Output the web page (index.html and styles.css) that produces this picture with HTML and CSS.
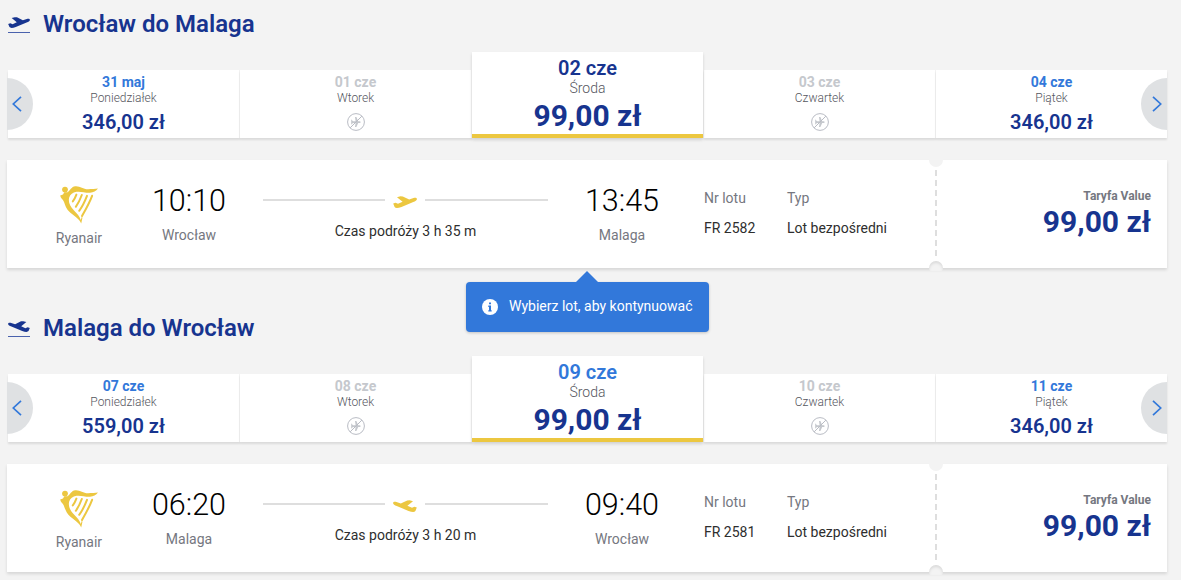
FILE: index.html
```html
<!DOCTYPE html>
<html lang="pl">
<head>
    <meta charset="UTF-8">
    <meta name="viewport" content="width=device-width, initial-scale=1.0">
    <title>Wybierz lot</title>
    <link rel="stylesheet" href="styles.css">
</head>
<body>
    <svg class="sprite" width="0" height="0">
        <symbol id="plane" viewBox="0 0 24 12">
            <path d="M.2 7.6 2.6 6.8 5 7.8 9.6 5.8 4 1.2 7.4.3 9.8.4 16.2 3.6 20.5 2.1C22.5 1.5 24 2 23.9 3.2 23.8 4.4 22.3 5.1 20.3 6L8.5 10.9C5 12.1 2.6 12.3 1.6 11Z"/>
        </symbol>
        <symbol id="harp" viewBox="0 0 38 38">
            <circle cx="5" cy="3.6" r="2.9"/>
            <path d="M.2 9.6 3 8.6 4.3 6.2 7.6 6.2C10 4.5 11.4.6 15.3.2 20-.2 23 3.2 28 3.2 32 3.2 35 3 38 2.6 36 5.2 33.5 6.7 30 6.8 25 7 21 5.2 16.5 5.8 12.5 6.4 10.4 8.4 9.2 11.4 8 16 10 20.4 13.8 24.2 17 27.6 19.8 30.4 20.8 34L22 30 22.4 32 21.2 37.5C19.2 32.8 14.7 30.6 10.4 26.8 6 22.8 5.3 19.3 3.9 15.7 3 13.5.4 12.4.2 9.6Z"/>
            <path class="strings" d="M16.4 8.6C15.5 11 14.6 13 12.8 15.4M21.8 9C20.5 12.5 18.6 17 15.8 20.8M27 9.9C25.2 14.5 22.5 20.5 19.2 24.8M32.1 9.8C29.8 16 26 23 22 30"/>
        </symbol>
        <symbol id="no-flight" viewBox="0 0 18 18">
            <path class="body" d="M4.2 6.2 6 8.2H8.6L8 4H9.4L11.2 8.2H12.8Q14.8 9 12.8 9.9H11.2L9.4 14H8L8.6 9.9H6L4.2 11.8Z"/>
            <path d="M3.1 14.9 14.9 3.1"/>
            <circle cx="9" cy="9" r="8.4"/>
        </symbol>
        <symbol id="chevron" viewBox="0 0 10 16">
            <path d="M9 .8 1.3 8 9 15.2"/>
        </symbol>
    </svg>

    <section class="journey">
        <header class="journey-header">
            <span class="journey-icon"><svg><use href="#plane"/></svg></span>
            <h2>Wrocław do Malaga</h2>
        </header>
        <div class="carousel">
            <button class="arrow prev" aria-label="Wstecz"><svg><use href="#chevron"/></svg></button>
            <div class="day">
                <div class="date">31 maj</div>
                <div class="weekday">Poniedziałek</div>
                <div class="price">346,00 zł</div>
            </div>
            <div class="day disabled">
                <div class="date">01 cze</div>
                <div class="weekday">Wtorek</div>
                <svg class="no-flight"><use href="#no-flight"/></svg>
            </div>
            <div class="day selected current">
                <div class="date">02 cze</div>
                <div class="weekday">Środa</div>
                <div class="price">99,00 zł</div>
            </div>
            <div class="day disabled">
                <div class="date">03 cze</div>
                <div class="weekday">Czwartek</div>
                <svg class="no-flight"><use href="#no-flight"/></svg>
            </div>
            <div class="day last">
                <div class="date">04 cze</div>
                <div class="weekday">Piątek</div>
                <div class="price">346,00 zł</div>
            </div>
            <button class="arrow next" aria-label="Dalej"><svg><use href="#chevron"/></svg></button>
        </div>
        <div class="flight-card">
            <div class="airline">
                <svg><use href="#harp"/></svg>
                <span>Ryanair</span>
            </div>
            <div class="stop">
                <div class="time">10:10</div>
                <div class="city">Wrocław</div>
            </div>
            <div class="duration">
                <div class="route"><svg><use href="#plane"/></svg></div>
                <div>Czas podróży 3 h 35 m</div>
            </div>
            <div class="stop">
                <div class="time">13:45</div>
                <div class="city">Malaga</div>
            </div>
            <dl class="details number">
                <dt>Nr lotu</dt>
                <dd>FR 2582</dd>
            </dl>
            <dl class="details">
                <dt>Typ</dt>
                <dd>Lot bezpośredni</dd>
            </dl>
            <div class="tear"></div>
            <div class="fare">
                <div class="fare-name">Taryfa Value</div>
                <div class="fare-price">99,00 zł</div>
            </div>
            <div class="tooltip">
                <svg viewBox="0 0 16 16">
                    <circle cx="8" cy="8" r="8"/>
                    <path d="M7 3.4H9V5.2H7ZM6.3 6.6H9V11.2H9.7V12.5H6.3V11.2H7V7.9H6.3Z"/>
                </svg>
                <span>Wybierz lot, aby kontynuować</span>
            </div>
        </div>
    </section>

    <section class="journey inbound">
        <header class="journey-header">
            <span class="journey-icon"><svg><use href="#plane"/></svg></span>
            <h2>Malaga do Wrocław</h2>
        </header>
        <div class="carousel">
            <button class="arrow prev" aria-label="Wstecz"><svg><use href="#chevron"/></svg></button>
            <div class="day">
                <div class="date">07 cze</div>
                <div class="weekday">Poniedziałek</div>
                <div class="price">559,00 zł</div>
            </div>
            <div class="day disabled">
                <div class="date">08 cze</div>
                <div class="weekday">Wtorek</div>
                <svg class="no-flight"><use href="#no-flight"/></svg>
            </div>
            <div class="day selected">
                <div class="date">09 cze</div>
                <div class="weekday">Środa</div>
                <div class="price">99,00 zł</div>
            </div>
            <div class="day disabled">
                <div class="date">10 cze</div>
                <div class="weekday">Czwartek</div>
                <svg class="no-flight"><use href="#no-flight"/></svg>
            </div>
            <div class="day last">
                <div class="date">11 cze</div>
                <div class="weekday">Piątek</div>
                <div class="price">346,00 zł</div>
            </div>
            <button class="arrow next" aria-label="Dalej"><svg><use href="#chevron"/></svg></button>
        </div>
        <div class="flight-card">
            <div class="airline">
                <svg><use href="#harp"/></svg>
                <span>Ryanair</span>
            </div>
            <div class="stop">
                <div class="time">06:20</div>
                <div class="city">Malaga</div>
            </div>
            <div class="duration">
                <div class="route"><svg><use href="#plane"/></svg></div>
                <div>Czas podróży 3 h 20 m</div>
            </div>
            <div class="stop">
                <div class="time">09:40</div>
                <div class="city">Wrocław</div>
            </div>
            <dl class="details number">
                <dt>Nr lotu</dt>
                <dd>FR 2581</dd>
            </dl>
            <dl class="details">
                <dt>Typ</dt>
                <dd>Lot bezpośredni</dd>
            </dl>
            <div class="tear"></div>
            <div class="fare">
                <div class="fare-name">Taryfa Value</div>
                <div class="fare-price">99,00 zł</div>
            </div>
        </div>
    </section>
</body>
</html>
```
FILE: styles.css
```css
* {
    box-sizing: border-box;
    margin: 0;
    padding: 0;
}
body {
    font-family: Roboto, "Liberation Sans", sans-serif;
    font-size: 14px;
    line-height: 16px;
    background-color: #f3f3f3;
    color: #2e2e2e;
    overflow: hidden;
}
.sprite {
    position: absolute;
}
.journey {
    width: 1160px;
    height: 304px;
    margin-left: 7px;
}
.journey-header {
    display: flex;
    align-items: center;
    height: 48px;
    color: #17348f;
}
.journey-icon {
    width: 22px;
    height: 16px;
    margin: 2px 13px 0 1px;
    border-bottom: 1px solid #4a62ad;
}
.journey-icon svg {
    display: block;
    width: 22px;
    height: 11px;
    fill: #17348f;
}
.inbound .journey-icon svg,
.inbound .route svg {
    transform: scaleX(-1);
}
h2 {
    font-size: 24px;
    line-height: 32px;
    font-weight: 600;
}

/* date carousel */
.carousel {
    position: relative;
    display: flex;
    align-items: flex-end;
    height: 86px;
    margin-top: 4px;
    padding-left: 1px;
}
.day {
    flex: none;
    width: 232px;
    height: 68px;
    padding-top: 4px;
    background-color: #fff;
    border-right: 1px solid #f3f3f3;
    box-shadow: 0 2px 2px rgba(0,0,0,0.1);
    text-align: center;
}
.last {
    width: 231px;
    border-right: 0;
}
.date {
    font-weight: 700;
    color: #3278da;
}
.weekday {
    font-size: 12px;
    font-weight: 300;
    color: #55565e;
}
.price {
    margin-top: 4px;
    font-size: 20px;
    line-height: 24px;
    font-weight: 600;
    color: #17348f;
}
.disabled .date {
    color: #c5c8cd;
}
.no-flight {
    display: block;
    width: 18px;
    height: 18px;
    margin: 7px auto 0;
    fill: none;
    stroke: #b9bcc4;
}
.body {
    fill: #c5c8cd;
    stroke: none;
}
.selected {
    position: relative;
    width: 231px;
    height: 86px;
    margin-right: 1px;
    border-right: 0;
    border-bottom: 4px solid #ecc740;
    box-shadow: 0 2px 3px rgba(0,0,0,0.14);
}
.selected .date {
    font-size: 20px;
    line-height: 24px;
    font-weight: 600;
}
.current .date {
    color: #17348f;
}
.selected .weekday {
    font-size: 14px;
}
.selected .price {
    margin-top: 1px;
    font-size: 30px;
    line-height: 37px;
    font-weight: 700;
}
.arrow {
    position: absolute;
    top: 26px;
    z-index: 1;
    width: 26px;
    height: 52px;
    border: none;
    background-color: #dfe1e3;
    cursor: pointer;
}
.arrow svg {
    display: block;
    width: 10px;
    height: 16px;
    margin-left: 5px;
    fill: none;
    stroke: #3278da;
    stroke-width: 1.7;
}
.prev {
    left: 0;
    border-radius: 0 26px 26px 0;
}
.next {
    right: 0;
    border-radius: 26px 0 0 26px;
}
.next svg {
    margin-left: 11px;
    transform: scaleX(-1);
}

/* flight card */
.flight-card {
    position: relative;
    display: flex;
    height: 108px;
    margin-top: 22px;
    background-color: #fff;
    box-shadow: 0 2px 3px rgba(0,0,0,0.12);
}
.airline {
    width: 144px;
    padding-top: 26px;
    text-align: center;
    color: #757780;
}
.airline svg {
    display: block;
    width: 38px;
    height: 38px;
    margin: 0 auto 6px;
    fill: #ecc740;
}
.strings {
    fill: none;
    stroke: #ecc740;
    stroke-width: 2;
    stroke-linecap: round;
}
.stop {
    width: 76px;
    padding-top: 23px;
    text-align: center;
}
.time {
    font-size: 30.5px;
    line-height: 36px;
    font-weight: 350;
    color: #000;
}
.city {
    margin-top: 8px;
    color: #757780;
}
.duration {
    width: 285px;
    margin: 0 36px;
    padding-top: 33px;
    text-align: center;
}
.route {
    display: flex;
    align-items: flex-start;
    height: 30px;
}
.route::before,
.route::after {
    content: "";
    width: 122px;
    height: 2px;
    margin-top: 6px;
    background-color: #dedede;
}
.route::after {
    width: 123px;
}
.route svg {
    width: 24px;
    height: 12px;
    margin: 3px 8px 0;
    fill: #ecc740;
}
.details {
    width: 141px;
    padding-top: 30px;
}
.number {
    width: 83px;
    margin-left: 44px;
}
dt {
    color: #757780;
}
dd {
    margin-top: 14px;
}
.tear {
    position: relative;
    width: 16px;
    background: repeating-linear-gradient(#dedede 0 6px, transparent 6px 10px) 50% 10px / 2px 88px no-repeat;
}
.tear::before,
.tear::after {
    content: "";
    position: absolute;
    left: 1px;
    width: 14px;
    height: 10px;
    background-color: #f3f3f3;
}
.tear::before {
    top: -3px;
    border-radius: 0 0 7px 7px;
}
.tear::after {
    bottom: -3px;
    border-radius: 7px 7px 0 0;
    box-shadow: inset 0 2px 3px rgba(0,0,0,0.1);
}
.fare {
    flex: 1;
    padding: 28px 16px 0 0;
    text-align: right;
}
.fare-name {
    font-size: 12px;
    font-weight: 700;
    color: #757780;
}
.fare-price {
    font-size: 30px;
    line-height: 36px;
    font-weight: 700;
    color: #17348f;
}
.tooltip {
    position: absolute;
    top: 122px;
    left: 459px;
    display: flex;
    align-items: center;
    width: 243px;
    height: 50px;
    padding: 0 16px;
    border-radius: 4px;
    background-color: #3278da;
    box-shadow: 0 1px 3px rgba(0,0,0,0.2);
    color: #fff;
    white-space: nowrap;
}
.tooltip::before {
    content: "";
    position: absolute;
    top: -11px;
    left: 110px;
    border: 11px solid transparent;
    border-top: 0;
    border-bottom-color: #3278da;
}
.tooltip svg {
    width: 16px;
    height: 16px;
    margin-right: 11px;
    fill: #fff;
}
.tooltip path {
    fill: #3278da;
}
.tooltip span {
    padding-bottom: 2px;
    font-weight: 450;
}
```
